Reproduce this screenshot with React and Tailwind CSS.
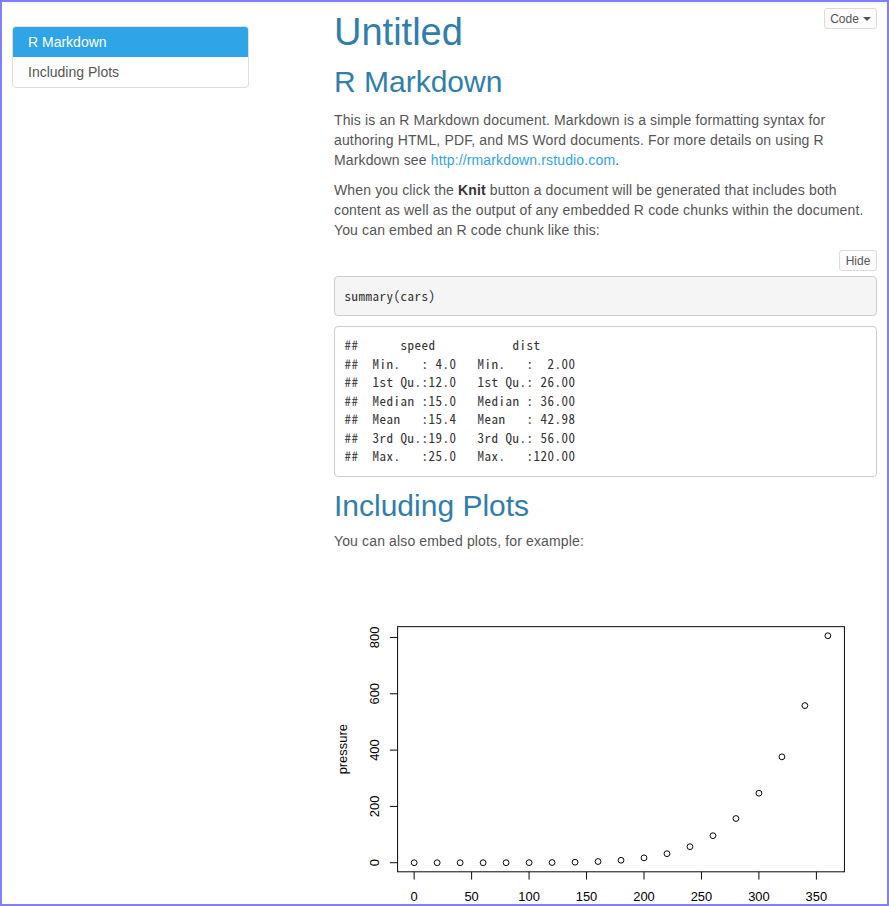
import React from "react";

const temps = [0, 20, 40, 60, 80, 100, 120, 140, 160, 180, 200, 220, 240, 260, 280, 300, 320, 340, 360];
const pressure = [0.0002, 0.0012, 0.006, 0.03, 0.09, 0.27, 0.75, 1.85, 4.2, 8.8, 17.3, 32.1, 57, 96, 157, 247, 376, 558, 806];

// plot region of a 672x480 R png
const L = 78.72, R = 631.68, T = 78.72, B = 382.08;
const px = (v) => L + ((v + 14.4) / 388.8) * (R - L);
const py = (v) => B - ((v + 32.24) / 870.48) * (B - T);

const PressurePlot = () => {
  const font = "'Liberation Sans', Arial, sans-serif";
  return (
    <svg width="543" height="388" viewBox="0 0 672 480" className="block">
      <rect x={L} y={T} width={R - L} height={B - T} fill="none" stroke="#000" strokeWidth="1.2" />

      {/* x axis */}
      {[0, 50, 100, 150, 200, 250, 300, 350].map((t) => (
        <g key={t}>
          <line x1={px(t)} x2={px(t)} y1={B} y2={B + 9.6} stroke="#000" strokeWidth="1.2" />
          <text x={px(t)} y={418} fontSize="16" fontFamily={font} textAnchor="middle" fill="#000">
            {t}
          </text>
        </g>
      ))}

      {/* y axis */}
      {[0, 200, 400, 600, 800].map((t) => (
        <g key={t}>
          <line x1={L - 9.6} x2={L} y1={py(t)} y2={py(t)} stroke="#000" strokeWidth="1.2" />
          <text
            x={56}
            y={py(t)}
            fontSize="16"
            fontFamily={font}
            textAnchor="middle"
            fill="#000"
            transform={`rotate(-90 56 ${py(t)})`}
          >
            {t}
          </text>
        </g>
      ))}
      <text
        x={15.7}
        y={230.4}
        fontSize="16"
        fontFamily={font}
        textAnchor="middle"
        fill="#000"
        transform="rotate(-90 15.7 230.4)"
      >
        pressure
      </text>

      {temps.map((t, i) => (
        <circle key={t} cx={px(t)} cy={py(pressure[i])} r="3.6" fill="none" stroke="#000" strokeWidth="1.2" />
      ))}
    </svg>
  );
};

const output = [
  "##      speed           dist       ",
  "##  Min.   : 4.0   Min.   :  2.00  ",
  "##  1st Qu.:12.0   1st Qu.: 26.00  ",
  "##  Median :15.0   Median : 36.00  ",
  "##  Mean   :15.4   Mean   : 42.98  ",
  "##  3rd Qu.:19.0   3rd Qu.: 56.00  ",
  "##  Max.   :25.0   Max.   :120.00  ",
];

export default function App() {
  return (
    <div className="h-[906px] overflow-hidden border-2 border-[#8080ff] bg-white font-['Liberation_Sans',Arial,sans-serif] text-[14px] leading-[20px] text-[#555] shadow-[inset_0_5px_5px_-4px_rgba(0,0,0,0.06)]">
      <div className="flex px-[10px]">
        {/* TOC */}
        <aside className="w-[237px] shrink-0 pt-[24px]">
          <div className="overflow-hidden rounded-[4px] border border-[#dddddd]">
            <div className="h-[30px] bg-[#2fa4e7] px-[15px] leading-[30px] text-white">R Markdown</div>
            <div className="h-[30px] px-[15px] leading-[30px] text-[#555]">Including Plots</div>
          </div>
        </aside>

        {/* content */}
        <main className="ml-[85px] w-[543px]">
          <div className="flex items-start justify-between">
            <h1 className="mt-[9px] text-[38px] leading-[42px] text-[#317eac]">Untitled</h1>
            <button className="mt-[6px] flex h-[21px] w-[53px] items-center justify-center rounded-[3px] border border-[#dcdcdc] bg-[#fcfcfc] text-[12px] text-[#555]">
              Code
              <span className="ml-[4px] inline-block h-0 w-0 border-x-[4px] border-t-[4px] border-x-transparent border-t-[#555]" />
            </button>
          </div>

          <h2 className="mt-[12px] mb-[12px] text-[30px] leading-[33px] text-[#317eac]">R Markdown</h2>
          <p className="tracking-[0.14px]">
            This is an R Markdown document. Markdown is a simple formatting syntax for authoring HTML, PDF, and MS
            Word documents. For more details on using R Markdown see{" "}
            <a className="text-[#2fa4e7]">http://rmarkdown.rstudio.com</a>.
          </p>
          <p className="mt-[10px] tracking-[0.14px]">
            When you click the <strong className="font-bold text-[#333]">Knit</strong> button a document will be
            generated that includes both content as well as the output of any embedded R code chunks within the
            document. You can embed an R code chunk like this:
          </p>

          <div className="mt-[10px] flex justify-end">
            <button className="flex h-[21px] w-[38px] items-center justify-center rounded-[3px] border border-[#dcdcdc] bg-[#fcfcfc] text-[12px] text-[#555]">
              Hide
            </button>
          </div>

          <pre className="mt-[5px] rounded-[4px] border border-[#cccccc] bg-[#f5f5f5] p-[9.5px] font-['Noto_Sans_Mono_CJK_JP','Liberation_Mono',monospace] text-[13px] leading-[18.57px] tracking-[0.5px] text-[#333]">
            summary(cars)
          </pre>
          <pre className="mt-[10px] rounded-[4px] border border-[#cccccc] bg-white p-[9.5px] font-['Noto_Sans_Mono_CJK_JP','Liberation_Mono',monospace] text-[13px] leading-[18.57px] tracking-[0.5px] text-[#333]">
            {output.join("\n")}
          </pre>

          <h2 className="mt-[12px] mb-[9px] text-[30px] leading-[33px] text-[#317eac]">Including Plots</h2>
          <p className="tracking-[0.14px]">You can also embed plots, for example:</p>

          <div className="mt-[12px]">
            <PressurePlot />
          </div>
        </main>
      </div>
    </div>
  );
}
